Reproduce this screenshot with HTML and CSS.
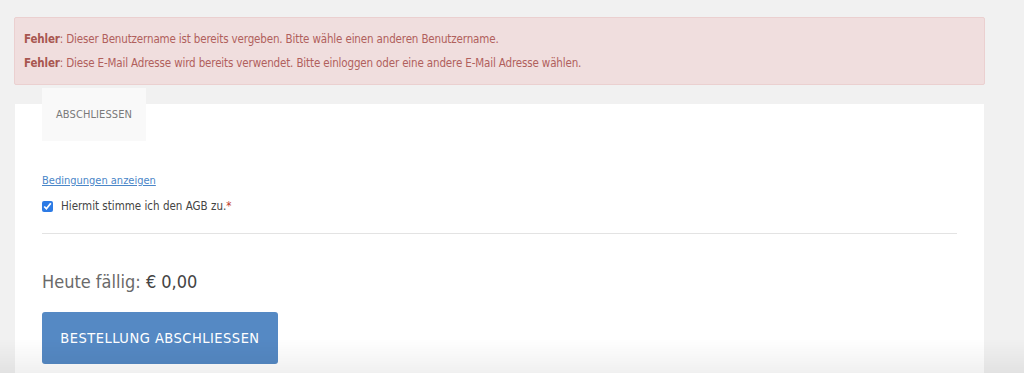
FILE: index.html
```html
<!DOCTYPE html>
<html lang="de">
<head>
<meta charset="utf-8">
<link rel="stylesheet" href="styles.css">
</head>
<body>
<div class="page">
  <div class="alert">
    <p><strong>Fehler</strong>: Dieser Benutzername ist bereits vergeben. Bitte wähle einen anderen Benutzername.</p>
    <p><strong>Fehler</strong>: Diese E-Mail Adresse wird bereits verwendet. Bitte einloggen oder eine andere E-Mail Adresse wählen.</p>
  </div>
  <div class="panel">
    <div class="tabs"><div class="tab">ABSCHLIESSEN</div></div>
    <a class="terms" href="#">Bedingungen anzeigen</a>
    <label class="agree"><input type="checkbox" checked> Hiermit stimme ich den AGB zu.<span class="req">*</span></label>
    <hr class="sep">
    <div class="due">Heute fällig: <span class="amount">€ 0,00</span></div>
    <button class="submit">BESTELLUNG ABSCHLIESSEN</button>
  </div>
</div>
<div class="fade"></div>
</body>
</html>
```
FILE: styles.css
```css
html, body {
  margin: 0;
  height: 100%;
  overflow: hidden;
}
body {
  background: #f1f1f1;
  font-family: "DejaVu Sans Condensed", "Liberation Sans", sans-serif;
  color: #555;
}
.page {
  padding: 17px 0 0 14px;
  width: 971px;
}
.alert {
  background: #f0dede;
  border: 1px solid #ebd0d0;
  border-radius: 2px;
  padding: 9px 9px;
  color: #b0605c;
  font-size: 11.5px;
  letter-spacing: -0.15px;
}
.alert p {
  margin: 0;
  line-height: 24px;
}
.alert strong {
  font-weight: bold;
  color: #a85650;
}
.panel {
  background: #fff;
  margin: 19px 1px 0 1px;
  padding: 0 27px 9px 27px;
  display: flex;
  flex-direction: column;
  align-items: flex-start;
}
.tabs {
  margin-top: -16px;
}
.tab {
  width: 104px;
  height: 53px;
  background: #f9f9f9;
  color: #7a7a7a;
  font-size: 11px;
  display: flex;
  align-items: center;
  justify-content: center;
  letter-spacing: 0.1px;
}
.terms {
  margin-top: 32px;
  color: #4a86c8;
  font-size: 11px;
  line-height: 16px;
}
.agree {
  margin-top: 9px;
  font-size: 11.5px;
  color: #444;
  display: flex;
  align-items: center;
  line-height: 16px;
}
.agree input {
  margin: 0 8px 0 0;
  width: 11px;
  height: 11px;
  accent-color: #2d7be5;
}
.req {
  color: #c0392b;
}
.sep {
  align-self: stretch;
  border: 0;
  border-top: 1px solid #e3e3e3;
  margin: 19px 0 0 0;
}
.due {
  margin-top: 36px;
  font-size: 18px;
  color: #6a6a6a;
  line-height: 24px;
}
.amount {
  color: #444;
  font-weight: 500;
}
.submit {
  margin-top: 18px;
  width: 236px;
  height: 52px;
  background: #5589c4;
  border: 0;
  border-radius: 3px;
  color: #fff;
  font-family: inherit;
  font-size: 14.5px;
  letter-spacing: 0.5px;
  white-space: nowrap;
  padding: 0;
}
.fade {
  position: fixed;
  left: 0;
  right: 0;
  bottom: 0;
  height: 34px;
  background: linear-gradient(rgba(0,0,0,0), rgba(0,0,0,0.06));
  pointer-events: none;
}
```
